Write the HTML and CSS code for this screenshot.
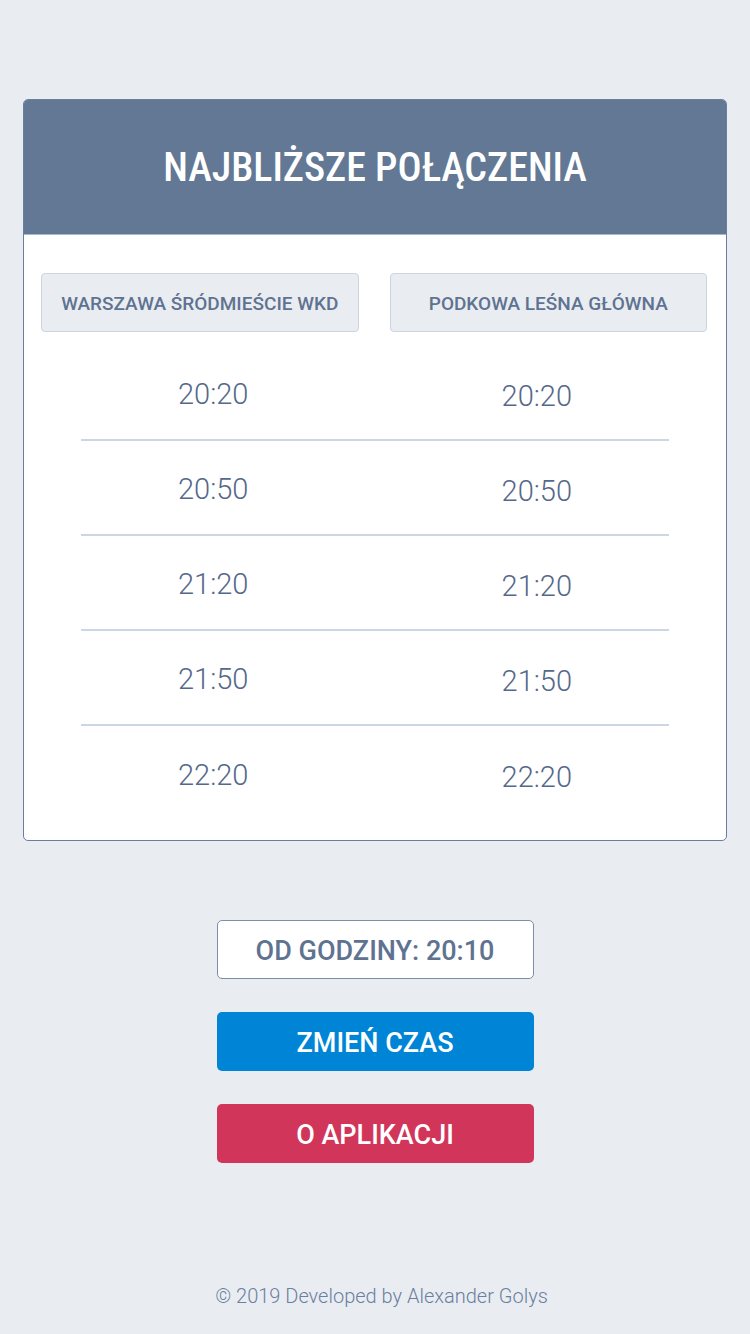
FILE: index.html
```html
<!DOCTYPE html>
<html lang="pl">
<head>
<meta charset="utf-8">
<title>Najbliższe połączenia</title>
<link rel="stylesheet" href="styles.css">
</head>
<body>
<main class="page">
  <section class="card">
    <header class="card-header">
      <h1 class="title">NAJBLIŻSZE POŁĄCZENIA</h1>
    </header>
    <div class="card-body">
      <div class="stations">
        <div class="station">WARSZAWA ŚRÓDMIEŚCIE WKD</div>
        <div class="station">PODKOWA LEŚNA GŁÓWNA</div>
      </div>
      <ul class="times">
        <li class="row"><span class="t">20:20</span><span class="t t-right">20:20</span></li>
        <li class="row"><span class="t">20:50</span><span class="t t-right">20:50</span></li>
        <li class="row"><span class="t">21:20</span><span class="t t-right">21:20</span></li>
        <li class="row"><span class="t">21:50</span><span class="t t-right">21:50</span></li>
        <li class="row"><span class="t">22:20</span><span class="t t-right">22:20</span></li>
      </ul>
    </div>
  </section>
  <div class="actions">
    <div class="btn btn-outline">OD GODZINY: 20:10</div>
    <div class="btn btn-blue">ZMIEŃ CZAS</div>
    <div class="btn btn-red">O APLIKACJI</div>
  </div>
  <footer class="footer">© 2019 Developed by Alexander Golys</footer>
</main>
</body>
</html>
```
FILE: styles.css
```css
* { box-sizing: border-box; }
html, body { margin: 0; padding: 0; }
body {
  background: #e9edf2;
  font-family: Roboto, "Noto Sans", sans-serif;
  width: 750px;
  height: 1334px;
  overflow: hidden;
}
.page {
  padding-top: 99px;
  display: flex;
  flex-direction: column;
}
.card {
  margin: 0 23px 0 23px;
  width: 704px;
  background: #fff;
  border: 1px solid #6b7f9d;
  border-radius: 5px;
  overflow: hidden;
}
.card-header {
  height: 135px;
  background: #627894;
  border-bottom: 1px solid #a9b8cb;
  display: flex;
  align-items: center;
  justify-content: center;
}
.title {
  margin: 0;
  padding-top: 1px;
  color: #fff;
  font-family: Roboto, sans-serif;
  font-stretch: 75%;
  font-weight: 500;
  font-size: 40px;
  letter-spacing: 0;
}
.card-body {
  padding: 38px 19px 19px 17px;
}
.stations {
  display: flex;
  gap: 31px;
}
.station {
  flex: 1;
  height: 59px;
  background: #e9edf2;
  border: 1px solid #cbd5e1;
  border-radius: 4px;
  display: flex;
  align-items: center;
  justify-content: center;
  padding-top: 2px;
  color: #5f7391;
  font-stretch: 88%;
  font-weight: 500;
  font-size: 19px;
}
.times {
  list-style: none;
  margin: 14px 38px 0 40px;
  padding: 0;
}
.row {
  height: 95px;
  display: flex;
  align-items: center;
  justify-content: space-between;
  padding: 3px 97px 0;
  border-bottom: 2px solid #cdd7e3;
}
.row:last-child { border-bottom: none; }
.t {
  color: #55688a;
  font-stretch: 88%;
  font-weight: 300;
  font-size: 29px;
}
.t-right { padding-top: 4px; }
.actions {
  margin-top: 79px;
  display: flex;
  flex-direction: column;
  align-items: center;
  gap: 33px;
}
.btn {
  width: 317px;
  height: 59px;
  border-radius: 5px;
  display: flex;
  align-items: center;
  justify-content: center;
  padding-top: 2px;
  font-size: 27px;
  font-weight: 500;
}
.btn-outline {
  background: #fff;
  border: 1px solid #7b8fab;
  color: #5f7391;
}
.btn-blue { background: #0085d6; color: #fff; }
.btn-red { background: #d1355a; color: #fff; }
.footer {
  margin-top: 121px;
  padding-left: 13px;
  text-align: center;
  color: #6b7fa0;
  font-size: 20px;
  font-weight: 300;
}
```
